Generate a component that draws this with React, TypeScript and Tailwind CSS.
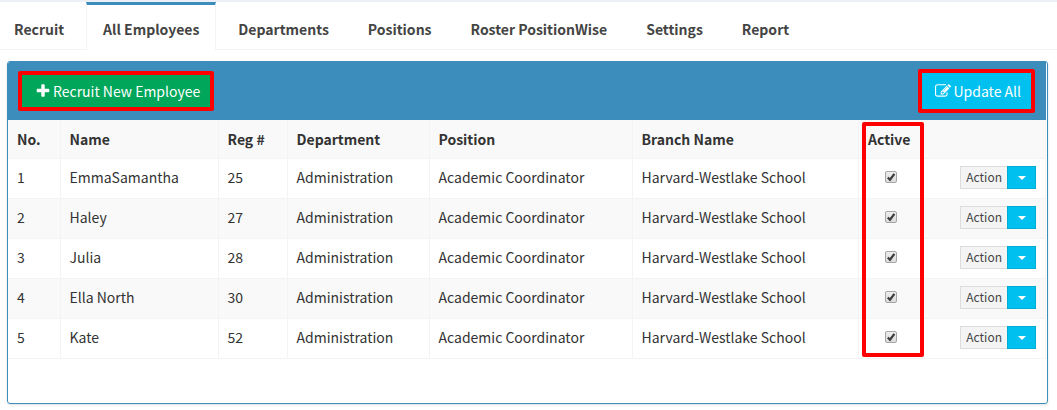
import React, { useState } from 'react';
import clsx from 'clsx';

type Employee = {
    no: number;
    name: string;
    reg: string;
    department: string;
    position: string;
    branch: string;
};

const TABS = ['Recruit', 'All Employees', 'Departments', 'Positions', 'Roster PositionWise', 'Settings', 'Report'];

const COLUMNS = [
    { label: 'No.', width: 'w-[52px]' },
    { label: 'Name', width: 'w-[158px]' },
    { label: 'Reg #', width: 'w-[69px]' },
    { label: 'Department', width: 'w-[142px]' },
    { label: 'Position', width: 'w-[203px]' },
    { label: 'Branch Name', width: '' },
    { label: 'Active', width: 'w-[64px]' },
    { label: '', width: 'w-[123px]' },
];

const EMPLOYEES: Employee[] = [
    { no: 1, name: 'EmmaSamantha', reg: '25', department: 'Administration', position: 'Academic Coordinator', branch: 'Harvard-Westlake School' },
    { no: 2, name: 'Haley', reg: '27', department: 'Administration', position: 'Academic Coordinator', branch: 'Harvard-Westlake School' },
    { no: 3, name: 'Julia', reg: '28', department: 'Administration', position: 'Academic Coordinator', branch: 'Harvard-Westlake School' },
    { no: 4, name: 'Ella North', reg: '30', department: 'Administration', position: 'Academic Coordinator', branch: 'Harvard-Westlake School' },
    { no: 5, name: 'Kate', reg: '52', department: 'Administration', position: 'Academic Coordinator', branch: 'Harvard-Westlake School' },
];

const CELL = 'border-r border-[#f4f4f4] px-[9px] pb-0.5';

const PlusIcon = () => (
    <svg viewBox="0 0 1792 1792" className="w-4 h-4 fill-current" aria-hidden="true">
        <path d="M1600 736v192q0 40-28 68t-68 28h-416v416q0 40-28 68t-68 28h-192q-40 0-68-28t-28-68v-416h-416q-40 0-68-28t-28-68v-192q0-40 28-68t68-28h416v-416q0-40 28-68t68-28h192q40 0 68 28t28 68v416h416q40 0 68 28t28 68z" />
    </svg>
);

const EditIcon = () => (
    <svg viewBox="0 0 1792 1792" className="w-4 h-4 fill-current" aria-hidden="true">
        <path d="M888 1184l116-116-152-152-116 116v56h96v96h56zm440-720q-16-16-33 1l-350 350q-17 17-1 33t33-1l350-350q17-17 1-33zm80 594v190q0 119-84.5 203.5t-203.5 84.5h-832q-119 0-203.5-84.5t-84.5-203.5v-832q0-119 84.5-203.5t203.5-84.5h832q63 0 117 25 15 7 18 23 3 17-9 29l-49 49q-14 14-32 8-23-6-45-6h-832q-66 0-113 47t-47 113v832q0 66 47 113t113 47h832q66 0 113-47t47-113v-126q0-13 9-22l64-64q15-15 35-7t20 29zm-96-738l288 288-672 672h-288v-288zm444 132l-92 92-288-288 92-92q28-28 68-28t68 28l152 152q28 28 28 68t-28 68z" />
    </svg>
);

const ActiveCheckbox: React.FC<{ name: string }> = ({ name }) => {
    const [checked, setChecked] = useState(true);
    return (
        <label className="relative mx-auto block w-3 h-3">
            <input
                type="checkbox"
                aria-label={`${name} active`}
                checked={checked}
                onChange={() => setChecked(!checked)}
                className="block appearance-none w-3 h-3 rounded-xs border border-[#a6a6a6] bg-linear-to-b from-[#eeeeee] to-[#dcdcdc]"
            />
            {checked && (
                <svg viewBox="0 0 12 12" className="pointer-events-none absolute inset-0 w-3 h-3" aria-hidden="true">
                    <path d="M2.8 6.4L5 8.7L9.4 2.8" fill="none" stroke="#3c3c3c" strokeWidth="2.2" />
                </svg>
            )}
        </label>
    );
};

const ActionButtons = () => (
    <div className="flex justify-end">
        <button type="button" className="h-[23px] px-[5px] border border-r-0 border-[#dddddd] bg-[#f4f4f4] text-[12px] leading-5 text-[#444444]">
            Action
        </button>
        <button type="button" aria-label="More actions" className="flex h-[23px] w-[29px] items-center justify-center border border-[#00acd6] bg-[#00c0ef] text-white">
            <svg viewBox="0 0 8 4" className="mt-0.5 w-2 h-1 fill-current" aria-hidden="true">
                <path d="M0 0h8L4 4z" />
            </svg>
        </button>
    </div>
);

const App: React.FC = () => {
    const [activeTab, setActiveTab] = useState('All Employees');

    return (
        <div className="border-t-2 border-[#ecf0f5] bg-white pb-1.5 font-['Noto_Sans_CJK_SC',sans-serif] text-[14px] leading-5 text-[#333333]">
            <nav className="flex gap-[5px] border-b border-[#f4f4f4]">
                {TABS.map((tab) => (
                    <a
                        key={tab}
                        href="#"
                        onClick={() => setActiveTab(tab)}
                        className={clsx(
                            '-mb-px h-12 border-x border-t-3 px-4 pt-3.5 font-bold whitespace-nowrap text-[#444444] first:-ml-[3px]',
                            tab === activeTab ? 'border-x-[#f4f4f4] border-t-[#3c8dbc] bg-white' : 'border-transparent',
                        )}
                    >
                        {tab}
                    </a>
                ))}
            </nav>

            <section className="mt-[11px] ml-[7px] mr-[9px] rounded-[3px] border border-[#3c8dbc] pb-[44px] shadow-sm">
                <header className="mr-px flex h-[58px] items-center justify-between rounded-tl-[2px] bg-[#3c8dbc] pl-2.5 pr-[11px] text-white">
                    <button type="button" className="flex h-10 items-center gap-0.5 rounded-xs border-4 border-[#ff0000] bg-[#00a65a] pl-[13px] pr-2.5">
                        <PlusIcon />
                        Recruit New Employee
                    </button>
                    <button type="button" className="flex h-11 items-center gap-0.5 rounded-xs border-4 border-[#ff0000] bg-[#00c0ef] pl-[13px] pr-2.5">
                        <EditIcon />
                        Update All
                    </button>
                </header>

                <div className="relative mr-px">
                    <table className="w-full table-fixed border-collapse">
                        <thead>
                            <tr className="h-[38px] border-b border-[#f4f4f4] bg-[#f9f9f9]">
                                {COLUMNS.map((column) => (
                                    <th key={column.label} className={clsx('border-r border-[#f4f4f4] px-[9px] text-left font-bold', column.width)}>
                                        {column.label}
                                    </th>
                                ))}
                            </tr>
                        </thead>
                        <tbody>
                            {EMPLOYEES.map((employee) => (
                                <tr key={employee.no} className="h-10 border-b border-[#f4f4f4] even:bg-[#f9f9f9]">
                                    <td className={CELL}>{employee.no}</td>
                                    <td className={CELL}>{employee.name}</td>
                                    <td className={CELL}>{employee.reg}</td>
                                    <td className={CELL}>{employee.department}</td>
                                    <td className={CELL}>{employee.position}</td>
                                    <td className={CELL}>{employee.branch}</td>
                                    <td className={CELL}>
                                        <ActiveCheckbox name={employee.name} />
                                    </td>
                                    <td className={CELL}>
                                        <ActionButtons />
                                    </td>
                                </tr>
                            ))}
                        </tbody>
                    </table>
                    {/* Highlight around the Active column */}
                    <div className="pointer-events-none absolute top-0.5 right-[122px] bottom-0.5 w-[62px] rounded-xs border-4 border-[#ff0000]" />
                </div>
            </section>
        </div>
    );
};

export default App;
